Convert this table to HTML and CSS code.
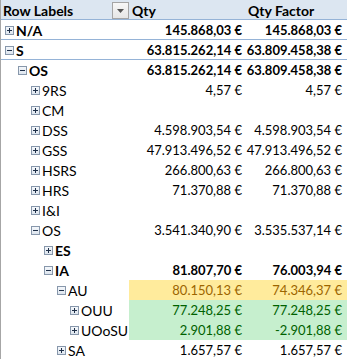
FILE: index.html
```html
<!DOCTYPE html>
<html>
<head>
<meta charset="utf-8">
<link rel="stylesheet" href="styles.css">
</head>
<body>
<div class="pivot">
  <div class="row head">
    <div class="c1"><span>Row Labels</span><span class="dd"><svg width="7" height="4" viewBox="0 0 7 4"><path d="M0 0H7L3.5 4Z" fill="#555"/></svg></span></div>
    <div class="c2 hl">Qty</div>
    <div class="c3 hl">Qty Factor</div>
  </div>
  <div class="row sep b">
    <div class="c1 l0"><i class="ic plus"></i>N/A</div>
    <div class="c2">145.868,03 €</div>
    <div class="c3">145.868,03 €</div>
  </div>
  <div class="row sep b">
    <div class="c1 l0"><i class="ic minus"></i>S</div>
    <div class="c2">63.815.262,14 €</div>
    <div class="c3">63.809.458,38 €</div>
  </div>
  <div class="row b">
    <div class="c1 l1"><i class="ic minus"></i>OS</div>
    <div class="c2">63.815.262,14 €</div>
    <div class="c3">63.809.458,38 €</div>
  </div>
  <div class="row">
    <div class="c1 l2"><i class="ic plus"></i>9RS</div>
    <div class="c2">4,57 €</div>
    <div class="c3">4,57 €</div>
  </div>
  <div class="row">
    <div class="c1 l2"><i class="ic plus"></i>CM</div>
    <div class="c2"></div>
    <div class="c3"></div>
  </div>
  <div class="row">
    <div class="c1 l2"><i class="ic plus"></i>DSS</div>
    <div class="c2">4.598.903,54 €</div>
    <div class="c3">4.598.903,54 €</div>
  </div>
  <div class="row">
    <div class="c1 l2"><i class="ic plus"></i>GSS</div>
    <div class="c2">47.913.496,52 €</div>
    <div class="c3">47.913.496,52 €</div>
  </div>
  <div class="row">
    <div class="c1 l2"><i class="ic plus"></i>HSRS</div>
    <div class="c2">266.800,63 €</div>
    <div class="c3">266.800,63 €</div>
  </div>
  <div class="row">
    <div class="c1 l2"><i class="ic plus"></i>HRS</div>
    <div class="c2">71.370,88 €</div>
    <div class="c3">71.370,88 €</div>
  </div>
  <div class="row">
    <div class="c1 l2"><i class="ic plus"></i>I&amp;I</div>
    <div class="c2"></div>
    <div class="c3"></div>
  </div>
  <div class="row">
    <div class="c1 l2"><i class="ic minus"></i>OS</div>
    <div class="c2">3.541.340,90 €</div>
    <div class="c3">3.535.537,14 €</div>
  </div>
  <div class="row b">
    <div class="c1 l3"><i class="ic plus"></i>ES</div>
    <div class="c2"></div>
    <div class="c3"></div>
  </div>
  <div class="row b">
    <div class="c1 l3"><i class="ic minus"></i>IA</div>
    <div class="c2">81.807,70 €</div>
    <div class="c3">76.003,94 €</div>
  </div>
  <div class="row">
    <div class="c1 l4"><i class="ic minus"></i>AU</div>
    <div class="c2 neutral">80.150,13 €</div>
    <div class="c3 neutral">74.346,37 €</div>
  </div>
  <div class="row">
    <div class="c1 l5"><i class="ic plus"></i>OUU</div>
    <div class="c2 good">77.248,25 €</div>
    <div class="c3 good">77.248,25 €</div>
  </div>
  <div class="row">
    <div class="c1 l5"><i class="ic plus"></i>UOoSU</div>
    <div class="c2 good">2.901,88 €</div>
    <div class="c3 good">-2.901,88 €</div>
  </div>
  <div class="row">
    <div class="c1 l4"><i class="ic plus"></i>SA</div>
    <div class="c2">1.657,57 €</div>
    <div class="c3">1.657,57 €</div>
  </div>
</div>
</body>
</html>
```
FILE: styles.css
```css
html, body {
  margin: 0;
  padding: 0;
  background: #ffffff;
}
body {
  font-family: Lato, "Open Sans", sans-serif;
  font-size: 13px;
  color: #000;
  overflow: hidden;
}
.pivot {
  border-left: 1px solid #a6a6a6;
  width: 346px;
  height: 359px;
}
.row {
  display: grid;
  grid-template-columns: 128px 116px 102px;
  height: 20px;
  box-sizing: border-box;
}
.row > div {
  line-height: 19px;
  padding-top: 1px;
  white-space: nowrap;
}
.c1 {
  display: flex;
  align-items: flex-start;
  font-size: 14px;
}
.c2 {
  text-align: right;
  padding-right: 3px;
}
.c3 {
  text-align: right;
  padding-right: 5px;
}
.head {
  background: #dce6f1;
  border-bottom: 1px solid #95b3d7;
  font-weight: bold;
}
.head .c1 {
  justify-content: space-between;
  padding-left: 2px;
}
.head .hl {
  text-align: left;
  padding-left: 3px;
  font-size: 14px;
}
.dd {
  width: 15px;
  height: 15px;
  margin-top: 1px;
  border: 1px solid #a5a5a5;
  background: linear-gradient(#f7f7f7, #e6e6e6);
  display: flex;
  align-items: center;
  justify-content: center;
}
.sep {
  border-bottom: 1px solid #95b3d7;
}
.b {
  font-weight: bold;
}
.ic {
  width: 9px;
  height: 9px;
  box-sizing: border-box;
  border: 1px solid #8797ab;
  background: linear-gradient(#f4f7fb, #dde5ee);
  margin-top: 5px;
  margin-right: 2px;
  flex: none;
  position: relative;
}
.ic::before {
  content: "";
  position: absolute;
  left: 1px;
  top: 3px;
  width: 5px;
  height: 1px;
  background: #1e2f48;
}
.plus::after {
  content: "";
  position: absolute;
  left: 3px;
  top: 1px;
  width: 1px;
  height: 5px;
  background: #1e2f48;
}
.l0 { padding-left: 4px; }
.l1 { padding-left: 17px; }
.l2 { padding-left: 30px; }
.l3 { padding-left: 43px; }
.l4 { padding-left: 56px; }
.l5 { padding-left: 69px; }
.neutral {
  background: #ffeb9c;
  color: #9c6500;
}
.good {
  background: #c6efce;
  color: #006100;
}
```
